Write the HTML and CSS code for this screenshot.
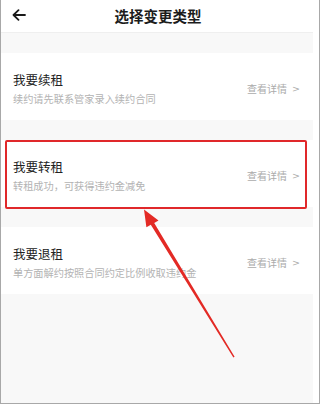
FILE: index.html
```html
<!DOCTYPE html>
<html lang="zh">
<head>
<meta charset="utf-8">
<link rel="stylesheet" href="styles.css">
</head>
<body>
<div class="frame">
  <div class="screen">
    <header class="header">
      <svg class="back" width="14" height="12" viewBox="0 0 14 12"><path d="M13 6H1.8M6.5 1.2L1.5 6l5 4.8" fill="none" stroke="#1a1a1a" stroke-width="1.8" stroke-linecap="round" stroke-linejoin="round"/></svg>
      <h1 class="title">选择变更类型</h1>
    </header>
    <div class="list">
      <div class="card">
        <div class="text">
          <div class="name">我要续租</div>
          <div class="desc">续约请先联系管家录入续约合同</div>
        </div>
        <div class="link">查看详情<span class="chev">&gt;</span></div>
      </div>
      <div class="card">
        <div class="text">
          <div class="name">我要转租</div>
          <div class="desc">转租成功，可获得违约金减免</div>
        </div>
        <div class="link">查看详情<span class="chev">&gt;</span></div>
      </div>
      <div class="card">
        <div class="text">
          <div class="name">我要退租</div>
          <div class="desc">单方面解约按照合同约定比例收取违约金</div>
        </div>
        <div class="link">查看详情<span class="chev">&gt;</span></div>
      </div>
    </div>
    <div class="rest"></div>
  </div>
  <div class="highlight"></div>
  <svg class="arrow" width="320" height="404" viewBox="0 0 320 404">
    <polygon fill="#e32a25" points="144,209.5 158.5,220.6 154.2,223 234.6,356.8 233.4,357.4 150.8,224.8 146.4,227.2"/>
  </svg>
</div>
</body>
</html>
```

FILE: styles.css
```css
html, body {
  margin: 0;
  padding: 0;
  background: #ffffff;
}
.frame {
  position: relative;
  width: 320px;
  height: 404px;
  box-sizing: border-box;
  border-left: 1px solid #a8a8a8;
  border-right: 1px solid #a8a8a8;
  border-bottom: 1px solid #a8a8a8;
  background: #ffffff;
  overflow: hidden;
  font-family: "Noto Sans CJK SC", "Noto Sans", sans-serif;
}
.screen {
  width: 312px;
  height: 403px;
  background: #f8f8f8;
  display: flex;
  flex-direction: column;
}
.header {
  height: 33px;
  flex: 0 0 33px;
  box-sizing: border-box;
  background: #ffffff;
  border-bottom: 1px solid #efefef;
  display: flex;
  align-items: center;
  justify-content: center;
  position: relative;
}
.back {
  position: absolute;
  left: 11px;
  top: 9px;
}
.title {
  margin: 0;
  font-size: 14.5px;
  font-weight: 700;
  color: #1c1c1c;
  line-height: 20px;
  padding-left: 2px;
}
.list {
  padding-top: 20px;
  display: flex;
  flex-direction: column;
  gap: 20px;
}
.rest {
  flex: 1;
  background: #f8f8f8;
}
.card {
  height: 67px;
  box-sizing: border-box;
  background: #ffffff;
  padding: 4px 13px 0 12px;
  display: flex;
  align-items: center;
  justify-content: space-between;
}
.name {
  font-size: 12.5px;
  line-height: 16px;
  color: #222222;
  margin-bottom: 4px;
}
.desc {
  font-size: 10.2px;
  line-height: 14px;
  color: #b3b3b3;
}
.link {
  font-size: 10px;
  line-height: 14px;
  color: #ababab;
  display: flex;
  align-items: center;
}
.chev {
  margin-left: 5px;
  font-family: "DejaVu Sans", sans-serif;
  font-size: 9.5px;
}
.highlight {
  position: absolute;
  left: 4px;
  top: 140px;
  width: 302px;
  height: 69px;
  box-sizing: border-box;
  border: 2px solid #e0282a;
  border-radius: 2px;
}
.arrow {
  position: absolute;
  left: -1px;
  top: 0;
}
```
